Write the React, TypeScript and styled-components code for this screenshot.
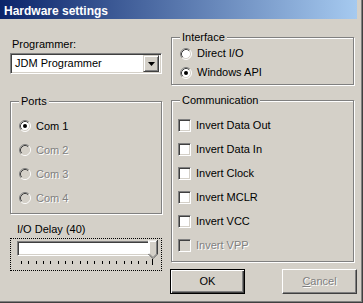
import React from 'react';
import styled, { createGlobalStyle } from 'styled-components';

const GlobalStyle = createGlobalStyle`
  body {
    margin: 0;
    background: #d4d0c8;
  }
`;

const face = '#d4d0c8';
const shadow = '#808080';
const dark = '#404040';

const Window = styled.div`
  width: 363px;
  height: 303px;
  box-sizing: border-box;
  background: ${face};
  font-family: 'Liberation Sans', Arial, sans-serif;
  font-size: 11px;
  line-height: 13px;
  color: #000;
  box-shadow: inset -1px -1px 0 ${dark}, inset -2px -2px 0 ${shadow};
  overflow: hidden;
`;

const TitleBar = styled.div`
  height: 19px;
  margin-right: 6px;
  box-sizing: border-box;
  padding: 3px 0 0 4px;
  background: linear-gradient(to right, #0a246a, #a6caf0);
  color: #fff;
  font-weight: bold;
  font-size: 12px;
  line-height: 16px;
`;

const Body = styled.div`
  display: flex;
  gap: 9px;
  padding-left: 10px;
  height: 284px;
  border-left: 1px solid #fff;
  margin-left: -1px;
`;

const Column = styled.div<{ $width: number }>`
  display: flex;
  flex-direction: column;
  width: ${(p) => p.$width}px;
`;

const Label = styled.div<{ $top: number; $left?: number }>`
  margin-top: ${(p) => p.$top}px;
  padding-left: ${(p) => p.$left ?? 0}px;
  height: 13px;
`;

const Combo = styled.div`
  margin-top: 2px;
  height: 21px;
  box-sizing: border-box;
  display: flex;
  align-items: center;
  background: #fff;
  border: 1px solid;
  border-color: ${shadow} #fff #fff ${shadow};
  box-shadow: inset 1px 1px 0 ${dark}, inset -1px -1px 0 ${face};
  padding: 1px 2px 1px 1px;
`;

const ComboText = styled.span`
  flex: 1;
  padding-left: 3px;
`;

const ComboButton = styled.div`
  width: 16px;
  height: 17px;
  box-sizing: border-box;
  background: ${face};
  border: 1px solid;
  border-color: ${face} ${dark} ${dark} ${face};
  box-shadow: inset 1px 1px 0 #fff, inset -1px -1px 0 ${shadow};
  display: flex;
  align-items: center;
  justify-content: center;
`;

const Group = styled.div<{ $top: number; $height: number; $padTop: number }>`
  margin-top: ${(p) => p.$top}px;
  height: ${(p) => p.$height}px;
  box-sizing: border-box;
  border: 1px solid ${shadow};
  box-shadow: inset 1px 1px 0 #fff, 1px 1px 0 #fff;
  display: flex;
  flex-direction: column;

  & > div:nth-child(2) {
    margin-top: ${(p) => p.$padTop}px;
  }
`;

const Legend = styled.span`
  display: block;
  width: fit-content;
  margin: -7px 0 0 8px;
  padding: 0 2px;
  background: ${face};
  height: 13px;
`;

const OptionRow = styled.div<{ $height: number; $pad: number; $disabled?: boolean }>`
  height: ${(p) => p.$height}px;
  display: flex;
  align-items: center;
  gap: 5px;
  padding-left: ${(p) => p.$pad}px;
  color: ${(p) => (p.$disabled ? shadow : '#000')};
  text-shadow: ${(p) => (p.$disabled ? '1px 1px 0 #fff' : 'none')};
`;

const CheckBox = styled.span<{ $disabled?: boolean }>`
  width: 13px;
  height: 13px;
  box-sizing: border-box;
  flex: none;
  background: ${(p) => (p.$disabled ? face : '#fff')};
  border: 1px solid;
  border-color: ${shadow} #fff #fff ${shadow};
  box-shadow: inset 1px 1px 0 ${dark}, inset -1px -1px 0 ${face};
`;

const SliderBox = styled.div`
  margin-top: 2px;
  height: 33px;
  box-sizing: border-box;
  border: 1px dotted #000;
  position: relative;
  padding: 2px 0 0 6px;
`;

const Track = styled.div`
  width: 139px;
  height: 15px;
  box-sizing: border-box;
  background: #fff;
  border: 1px solid;
  border-color: ${shadow} #fff #fff ${shadow};
  box-shadow: inset 1px 1px 0 ${dark}, inset -1px -1px 0 ${face};
`;

const Thumb = styled.svg`
  position: absolute;
  left: 137px;
  top: 1px;
`;

const Ticks = styled.div`
  display: flex;
  align-items: flex-start;
  gap: 6.33px;
  margin: 5px 0 0 4px;
  height: 7px;
`;

const Tick = styled.span<{ $long?: boolean }>`
  width: 1px;
  height: ${(p) => (p.$long ? 6 : 3)}px;
  margin-top: ${(p) => (p.$long ? -2 : 0)}px;
  background: #000;
`;

const ButtonRow = styled.div`
  margin: 7px -3px 0 -1px;
  display: flex;
  justify-content: space-between;
`;

const Button = styled.div<{ $default?: boolean; $disabled?: boolean }>`
  width: 75px;
  height: 25px;
  box-sizing: border-box;
  display: flex;
  align-items: center;
  justify-content: center;
  background: ${face};
  border: 1px solid;
  border-color: ${(p) => (p.$default ? '#000' : `#fff ${dark} ${dark} #fff`)};
  box-shadow: ${(p) =>
    p.$default
      ? `inset 1px 1px 0 #fff, inset -1px -1px 0 ${dark}, inset -2px -2px 0 ${shadow}`
      : `inset -1px -1px 0 ${shadow}`};
  color: ${(p) => (p.$disabled ? shadow : '#000')};
  text-shadow: ${(p) => (p.$disabled ? '1px 1px 0 #fff' : 'none')};

  u {
    text-decoration-thickness: 1px;
  }
`;

const Radio: React.FC<{ checked?: boolean; disabled?: boolean }> = ({ checked, disabled }) => (
  <svg width="12" height="12" viewBox="0 0 12 12" style={{ flex: 'none' }}>
    <circle cx="6" cy="6" r="5" fill={disabled ? face : '#fff'} />
    <path d="M2.11 9.89 A5.5 5.5 0 0 1 9.89 2.11" fill="none" stroke={shadow} />
    <path d="M9.89 2.11 A5.5 5.5 0 0 1 2.11 9.89" fill="none" stroke="#fff" />
    <path d="M2.82 9.18 A4.5 4.5 0 0 1 9.18 2.82" fill="none" stroke={dark} />
    <path d="M9.18 2.82 A4.5 4.5 0 0 1 2.82 9.18" fill="none" stroke={face} />
    {checked && <circle cx="6" cy="6" r="2" fill="#000" />}
  </svg>
);

const ports = ['Com 1', 'Com 2', 'Com 3', 'Com 4'];
const comms = ['Invert Data Out', 'Invert Data In', 'Invert Clock', 'Invert MCLR', 'Invert VCC'];

export default function App() {
  return (
    <>
      <GlobalStyle />
      <Window>
        <TitleBar>Hardware settings</TitleBar>
        <Body>
          <Column $width={152}>
            <Label $top={19} $left={2}>Programmer:</Label>
            <Combo>
              <ComboText>JDM Programmer</ComboText>
              <ComboButton>
                <svg width="7" height="4" viewBox="0 0 7 4">
                  <path d="M0 0 H7 L3.5 4 Z" fill="#000" />
                </svg>
              </ComboButton>
            </Combo>
            <Group $top={27} $height={113} $padTop={6}>
              <Legend>Ports</Legend>
              {ports.map((p, i) => (
                <OptionRow key={p} $height={24} $pad={8} $disabled={i > 0}>
                  <Radio checked={i === 0} disabled={i > 0} />
                  {p}
                </OptionRow>
              ))}
            </Group>
            <Label $top={9} $left={7}>I/O Delay (40)</Label>
            <SliderBox>
              <Track />
              <Thumb width="10" height="19" viewBox="0 0 10 19">
                <path d="M0.5 14 V0.5 H9" fill={face} stroke="#fff" />
                <path d="M0.5 14 L5 18.5 L9.5 14 V0" fill={face} stroke={dark} />
                <path d="M1 14 L5 18 L9 14 V0.5 H1 Z" fill={face} />
                <path d="M1.5 14 V1.5 H8" fill="none" stroke="#fff" />
                <path d="M1.5 14.2 L5 17.5 L8.5 14 V1" fill="none" stroke={shadow} />
              </Thumb>
              <Ticks>
                {Array.from({ length: 18 }).map((_, i) => (
                  <Tick key={i} />
                ))}
                <Tick $long style={{ marginLeft: -1 }} />
              </Ticks>
            </SliderBox>
          </Column>
          <Column $width={183}>
            <Group $top={18} $height={48} $padTop={0}>
              <Legend>Interface</Legend>
              <OptionRow $height={19} $pad={8}>
                <Radio />
                Direct I/O
              </OptionRow>
              <OptionRow $height={19} $pad={8}>
                <Radio checked />
                Windows API
              </OptionRow>
            </Group>
            <Group $top={15} $height={162} $padTop={6}>
              <Legend>Communication</Legend>
              {comms.map((c) => (
                <OptionRow key={c} $height={24} $pad={6}>
                  <CheckBox />
                  {c}
                </OptionRow>
              ))}
              <OptionRow $height={24} $pad={6} $disabled>
                <CheckBox $disabled />
                Invert VPP
              </OptionRow>
            </Group>
            <ButtonRow>
              <Button $default>OK</Button>
              <Button $disabled>
                <span>
                  <u>C</u>ancel
                </span>
              </Button>
            </ButtonRow>
          </Column>
        </Body>
      </Window>
    </>
  );
}
